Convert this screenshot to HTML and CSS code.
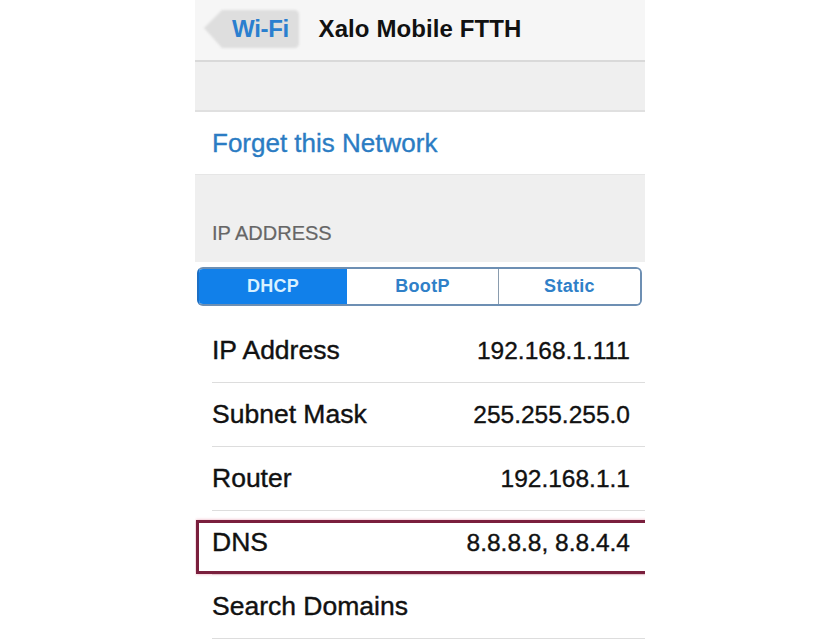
FILE: index.html
```html
<!DOCTYPE html>
<html lang="en">
<head>
<meta charset="utf-8">
<title>Xalo Mobile FTTH</title>
<link rel="stylesheet" href="styles.css">
</head>
<body>
<div class="screen">
  <header class="nav">
    <a class="back">
      <svg class="back-shape" width="100" height="42" viewBox="0 0 100 42" aria-hidden="true">
        <path d="M2 20 L20 2 L92 2 Q97 2 97 7 L97 35 Q97 40 92 40 L20 40 Z" fill="#dedede"/>
      </svg>
      <span class="back-label">Wi-Fi</span>
    </a>
    <h1 class="title">Xalo Mobile FTTH</h1>
  </header>
  <div class="spacer"></div>
  <div class="cell-action">Forget this Network</div>
  <div class="section-header">IP ADDRESS</div>
  <div class="segmented">
    <div class="seg active">DHCP</div>
    <div class="seg">BootP</div>
    <div class="seg">Static</div>
  </div>
  <ul class="rows">
    <li class="row"><span class="label">IP Address</span><span class="value">192.168.1.111</span></li>
    <li class="row"><span class="label">Subnet Mask</span><span class="value">255.255.255.0</span></li>
    <li class="row"><span class="label">Router</span><span class="value">192.168.1.1</span></li>
    <li class="row highlight"><span class="label">DNS</span><span class="value">8.8.8.8, 8.8.4.4</span></li>
    <li class="row"><span class="label">Search Domains</span><span class="value"></span></li>
  </ul>
</div>
</body>
</html>
```

FILE: styles.css
```css
* { box-sizing: border-box; }
html, body {
  margin: 0;
  padding: 0;
  background: #ffffff;
}
body {
  font-family: "Liberation Sans", Arial, sans-serif;
  display: flex;
  justify-content: center;
}
.screen {
  width: 450px;
  height: 639px;
  overflow: hidden;
  background: #ffffff;
  display: flex;
  flex-direction: column;
}
.nav {
  position: relative;
  height: 62px;
  flex: none;
  background: #f6f6f6;
  border-bottom: 2px solid #d9d9d9;
  display: flex;
  align-items: center;
  justify-content: center;
}
.back {
  position: absolute;
  left: 7px;
  top: 8px;
  width: 100px;
  height: 42px;
  display: flex;
  align-items: center;
}
.back-shape {
  position: absolute;
  left: 0;
  top: 0;
  filter: blur(1px);
}
.back-label {
  position: relative;
  margin-left: 30px;
  font-size: 24px;
  font-weight: bold;
  color: #2a7fcf;
  letter-spacing: -0.3px;
}
.title {
  margin: 0 0 2px;
  font-size: 24px;
  font-weight: bold;
  color: #111111;
  letter-spacing: 0.1px;
}
.spacer {
  height: 50px;
  flex: none;
  background: #efefef;
  border-bottom: 2px solid #e0e0e0;
}
.cell-action {
  height: 62px;
  flex: none;
  padding-left: 17px;
  display: flex;
  align-items: center;
  font-size: 26px;
  color: #2b7cc3;
  background: #ffffff;
  -webkit-text-stroke: 0.35px #2b7cc3;
}
.section-header {
  height: 88px;
  flex: none;
  background: #efefef;
  border-top: 1px solid #e6e6e6;
  padding: 0 0 17px 17px;
  display: flex;
  align-items: flex-end;
  font-size: 20px;
  line-height: 24px;
  color: #666666;
  -webkit-text-stroke: 0.2px #666666;
}
.segmented {
  flex: none;
  margin: 5px 3px 13px 2px;
  height: 39px;
  border: 2px solid #6d8fb3;
  border-left-color: #1c6fc4;
  border-radius: 6px;
  overflow: hidden;
  display: grid;
  grid-template-columns: 148px 151px 1fr;
}
.seg {
  display: flex;
  align-items: center;
  justify-content: center;
  font-size: 18px;
  font-weight: bold;
  color: #2f80c8;
  background: #ffffff;
  letter-spacing: 0.3px;
}
.seg + .seg {
  border-left: 1px solid #8a9cae;
}
.seg.active {
  background: #1180ea;
  color: #d9f1ff;
}
.seg.active + .seg {
  border-left: none;
}
.rows {
  list-style: none;
  margin: 0;
  padding: 0;
}
.row {
  position: relative;
  height: 64px;
  margin-left: 17px;
  padding-right: 15px;
  border-bottom: 1px solid #dddddd;
  display: flex;
  align-items: center;
  justify-content: space-between;
}
.label {
  font-size: 26.5px;
  color: #111111;
  -webkit-text-stroke: 0.4px #111111;
}
.value {
  font-size: 24.5px;
  color: #111111;
  -webkit-text-stroke: 0.35px #111111;
}
.highlight::before {
  content: "";
  position: absolute;
  left: -16px;
  right: -20px;
  top: 9px;
  bottom: 0;
  border: 3px solid #7a1f3d;
  box-shadow: 0 0 3px #eaa6b8;
  pointer-events: none;
}
```
